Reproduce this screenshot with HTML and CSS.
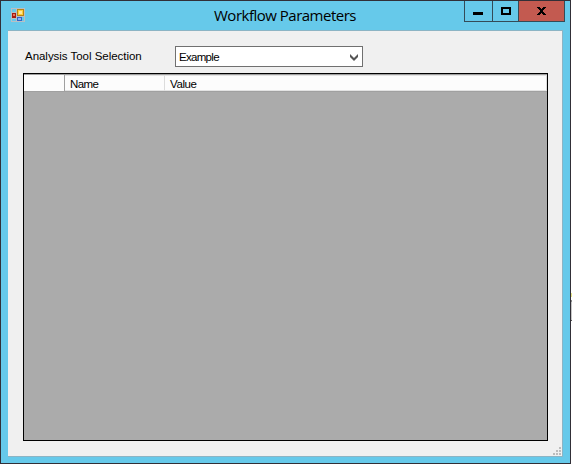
FILE: index.html
```
<!DOCTYPE html>
<html lang="en">
<head>
<meta charset="utf-8">
<title>Workflow Parameters</title>
<link rel="stylesheet" href="styles.css">
</head>
<body>
<div class="window">
  <header class="titlebar">
    <svg class="app-icon" width="14" height="14" viewBox="0 0 14 14" shape-rendering="crispEdges">
      <path d="M.5.5h13v13H.5zM5.500 0v14M0 4.500h5M0 10.500h5M5 8.500h9" fill="none" stroke="#b9bfc4"/>
      <path d="M1 5h4v5H1z" fill="#a51b12"/><path d="M2 6h2v2H2z" fill="#e8745c"/>
      <path d="M6 1h7v7H6z" fill="#b98312"/><path d="M7 2h5v5H7z" fill="#ffce38"/><path d="M8 3h3v3H8z" fill="#ffe79a"/>
      <path d="M6 9h5v4H6z" fill="#3265c8"/><path d="M7 10h3v2H7z" fill="#8bb4f5"/>
    </svg>
    <h1 class="title">Workflow Parameters</h1>
    <div class="controls">
      <button class="control minimize" aria-label="Minimize"><svg width="10" height="3"><path d="M0 0h10v3H0z"/></svg></button>
      <button class="control maximize" aria-label="Maximize"><svg width="10" height="8"><path d="M1 1h8v6H1z" fill="none" stroke="#000" stroke-width="2"/></svg></button>
      <button class="control close" aria-label="Close"><svg width="9" height="8" shape-rendering="crispEdges"><path d="M0 0h3v1h1v1h1V1h1V0h3v1H8v1H7v1H6v2h1v1h1v1h1v1H6V7H5V6H4v1H3v1H0V7h1V6h1V5h1V3H2V2H1V1H0z"/></svg></button>
    </div>
  </header>
  <main class="client">
    <div class="selector">
      <span class="label">Analysis Tool Selection</span>
      <div class="combo"><span class="combo-text">Example</span>
        <svg width="8" height="7" viewBox="0 0 8 7"><path d="M0 0L4 4L8 0V3L4 7L0 3z" fill="#555"/></svg>
      </div>
    </div>
    <div class="grid">
      <div class="columns">
        <div class="cell"></div>
        <div class="cell name">Name</div>
        <div class="cell value">Value</div>
      </div>
    </div>
    <svg class="grip" width="8" height="8" shape-rendering="crispEdges"><path d="M6 0h2v2H6zM3 3h2v2H3zM6 3h2v2H6zM0 6h2v2H0zM3 6h2v2H3zM6 6h2v2H6z" fill="#bcbcbc"/></svg>
  </main>
</div>
<div class="behind"></div>
</body>
</html>
```
FILE: styles.css
```
* { box-sizing: border-box; }
body {
  margin: 0;
  display: flex;
  width: 572px;
  height: 465px;
  overflow: hidden;
  background: #fff;
  font-family: "Liberation Sans", Arial, sans-serif;
  font-size: 11.5px;
  color: #000;
}
.window {
  width: 571px;
  height: 464px;
  border: 1px solid #312f37;
  background: #66c9ea;
  padding: 0 7px 6px;
}
.titlebar {
  display: grid;
  grid-template-columns: 101px 1fr 101px;
  height: 29px;
  margin-right: -2px;
}
.app-icon { margin: 7px 0 0 3px; }
.title {
  margin: 0;
  padding: 4px 3px 0 0;
  text-align: center;
  font: 400 15px/20px "Open Sans", "Noto Sans", sans-serif;
  letter-spacing: -0.5px;
  white-space: nowrap;
}
.controls {
  display: flex;
  height: 21px;
  border: 1px solid #344b57;
  border-top: 0;
}
.control {
  display: flex;
  justify-content: center;
  padding: 0;
  border: 0;
  background: none;
}
.minimize { width: 27px; padding: 11px 1px 0 0; }
.maximize { width: 26px; border-left: 1px solid #344b57; padding-top: 6px; }
.close { flex: 1; border-left: 1px solid #344b57; background: #c35a50; padding: 6px 1px 0 0; }
.client {
  position: relative;
  height: 427px;
  padding: 15px 15px 0;
  border: 1px solid #8cb4c4;
  border-left: 0;
  background: #f0f0f0;
}
.selector { display: flex; height: 27px; }
.label { width: 152px; padding: 3px 0 0 2px; line-height: 14px; letter-spacing: -0.03px; white-space: nowrap; }
.combo {
  display: flex;
  justify-content: space-between;
  align-items: center;
  width: 188px;
  height: 21px;
  padding: 1px 4px 0 3px;
  border: 1px solid #707070;
  background: #fff;
}
.combo-text { letter-spacing: -0.7px; }
.grid {
  width: 525px;
  height: 368px;
  border: 1px solid #000;
  background: #ababab;
}
.columns {
  display: grid;
  grid-template-columns: 41px 100px 1fr;
  grid-template-rows: 16px;
  height: 18px;
  border-top: 1px solid #a0a0a0;
  border-bottom: 1px solid #a0a0a0;
  background: #fcfcfc;
}
.cell { border-right: 1px solid #a0a0a0; }
.name, .value {
  padding-left: 5px;
  border-top: 1px solid #e3e3e3;
  border-right-color: #dcdcdc;
  border-bottom: 1px solid #e3e3e3;
  line-height: 17px;
  letter-spacing: -0.6px;
}
.value { letter-spacing: -0.4px; }
.grip { position: absolute; right: 1px; bottom: 1px; }
.behind {
  width: 1px;
  height: 465px;
  background: linear-gradient(#fff 0 293px, #e6e58a 293px 297px, #fff 297px 300px, #888 300px 302px, #c8c8c8 302px 320px, #555 320px 321px, #fff 321px);
}
```
